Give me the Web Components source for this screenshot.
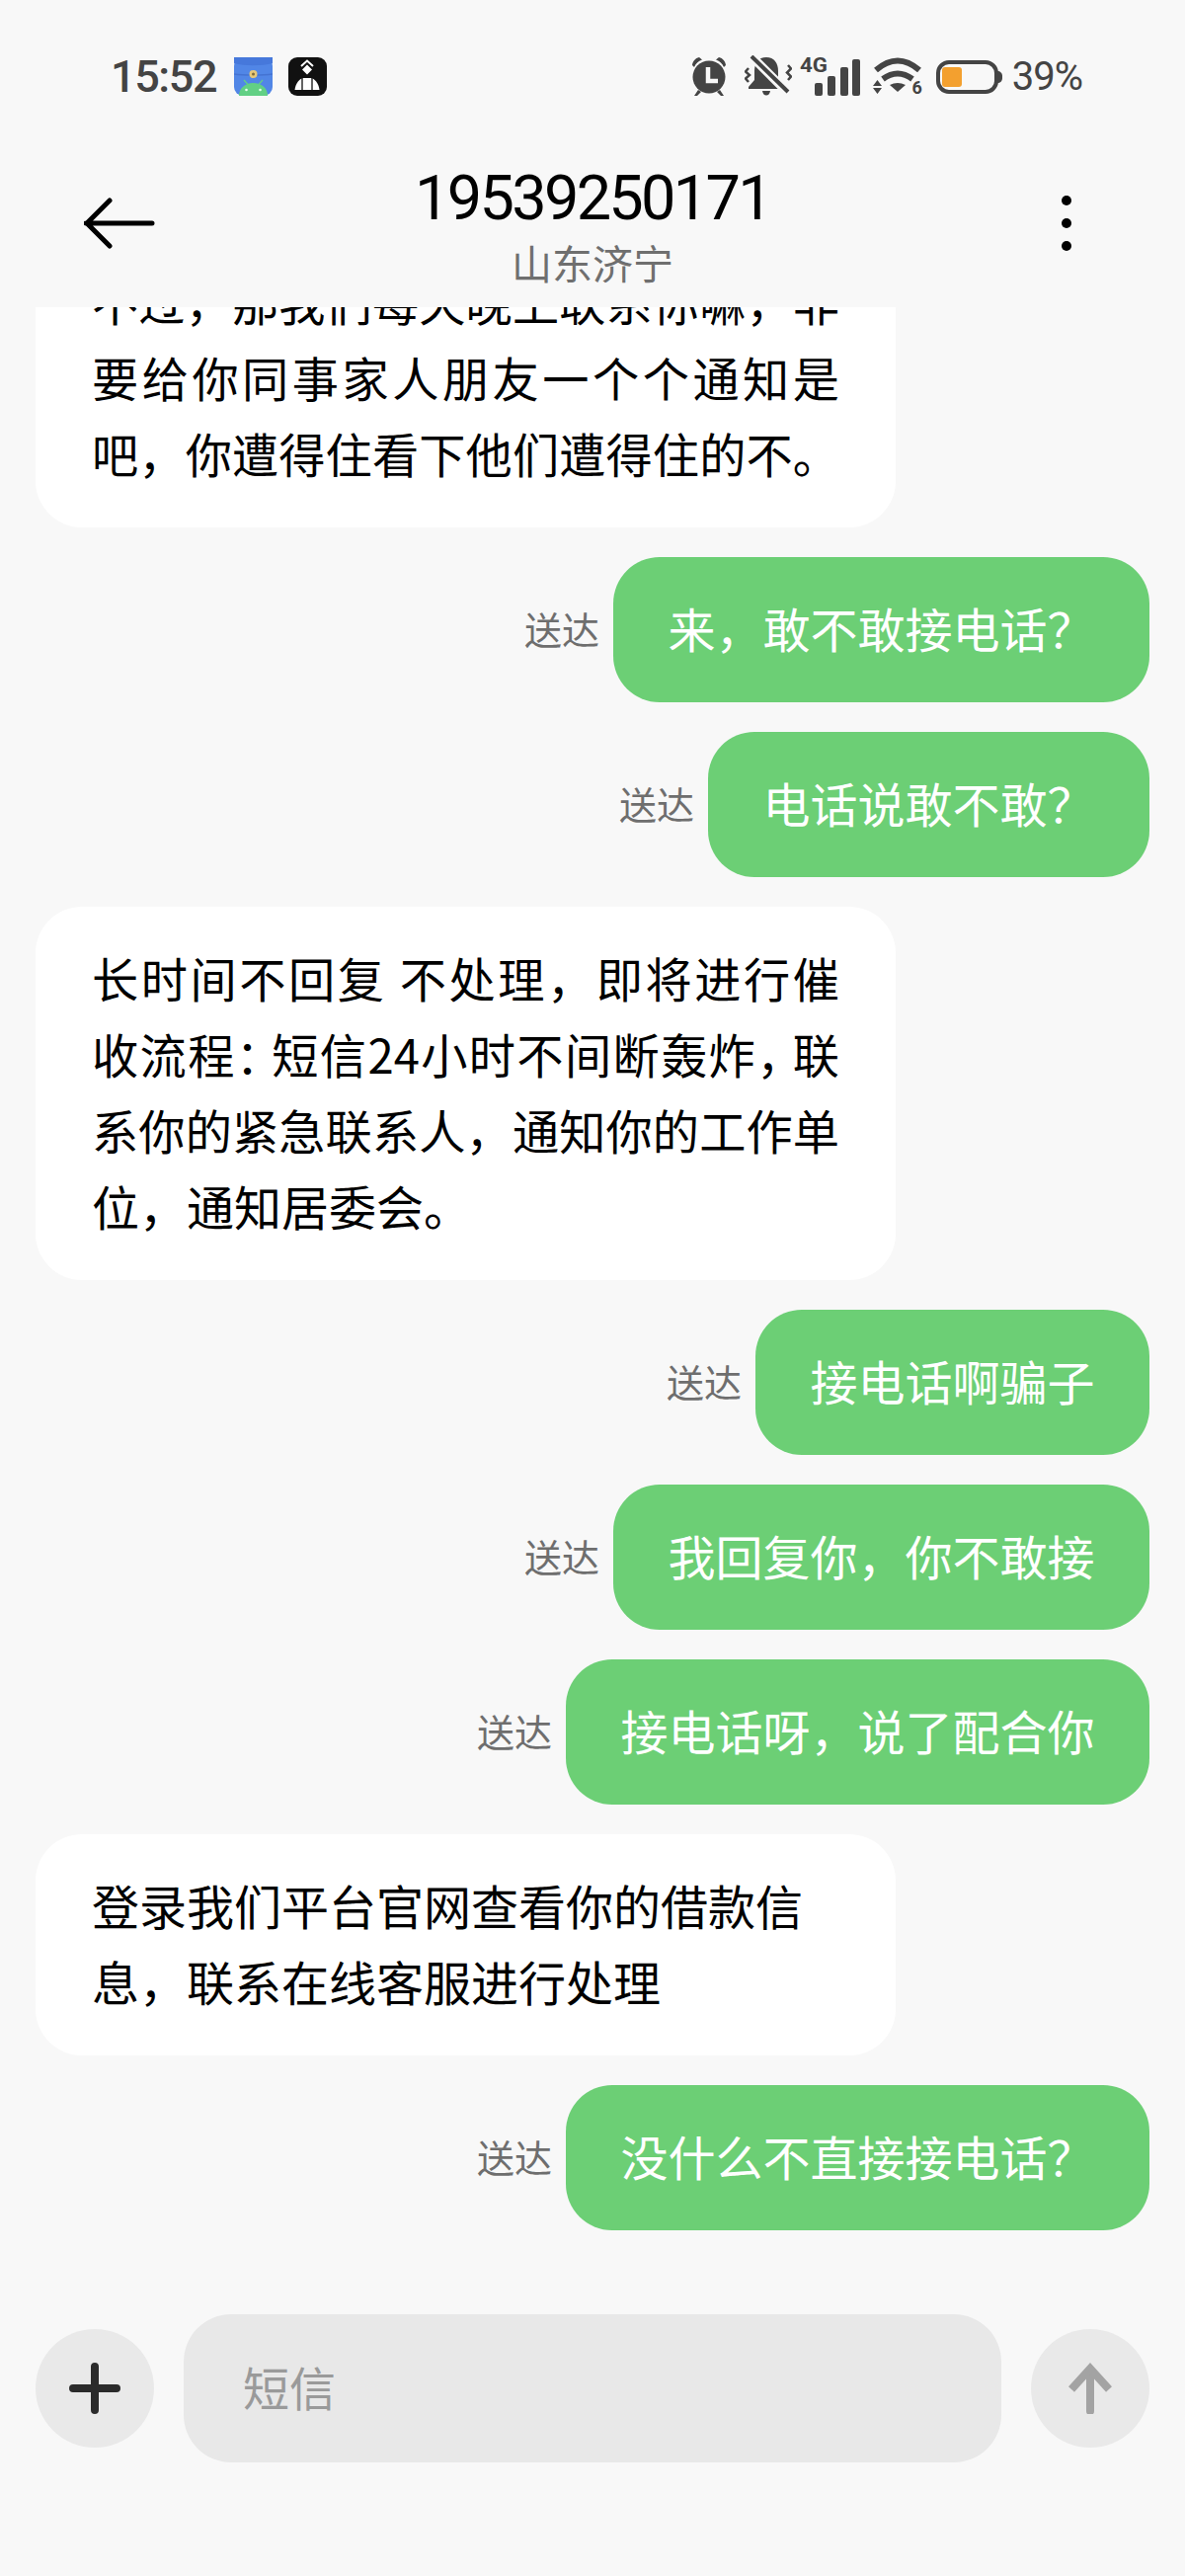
<!DOCTYPE html>
<html lang="zh-CN">
<head>
<meta charset="utf-8">
<title>短信</title>
<style>
	html, body { margin: 0; padding: 0; background: #f8f8f8; }
	body { font-family: "Noto Sans CJK SC", "Noto Sans", sans-serif; }
</style>
</head>
<body>
<sms-app>
	<status-bar slot="status"></status-bar>
	<chat-header slot="header" number="19539250171" place="山东济宁"></chat-header>
	<message-list slot="messages">
		<chat-bubble from="them">
			<bubble-line fit>不过，那我们每天晚上联系你嘛，非</bubble-line>
			<bubble-line fit>要给你同事家人朋友一个个通知是</bubble-line>
			<bubble-line fit>吧，你遭得住看下他们遭得住的不。</bubble-line>
		</chat-bubble>
		<chat-bubble from="me">来，敢不敢接电话？</chat-bubble>
		<chat-bubble from="me">电话说敢不敢？</chat-bubble>
		<chat-bubble from="them">
			<bubble-line fit>长时间不回复 不处理，即将进行催</bubble-line>
			<bubble-line fit>收流程<span style="letter-spacing:-12px">：</span>短信24小时不间断轰炸<span style="letter-spacing:-12px">，</span>联</bubble-line>
			<bubble-line fit>系你的紧急联系人，通知你的工作单</bubble-line>
			<bubble-line>位，通知居委会。</bubble-line>
		</chat-bubble>
		<chat-bubble from="me">接电话啊骗子</chat-bubble>
		<chat-bubble from="me">我回复你，你不敢接</chat-bubble>
		<chat-bubble from="me">接电话呀，说了配合你</chat-bubble>
		<chat-bubble from="them">
			<bubble-line>登录我们平台官网查看你的借款信</bubble-line>
			<bubble-line>息，联系在线客服进行处理</bubble-line>
		</chat-bubble>
		<chat-bubble from="me">没什么不直接接电话？</chat-bubble>
	</message-list>
	<chat-composer slot="composer" placeholder="短信"></chat-composer>
</sms-app>

<script>
customElements.define('sms-app', class extends HTMLElement
{
	connectedCallback()
	{
		const shadow = this.attachShadow({ mode: 'open' });

		shadow.innerHTML = `
			<style>
				:host {
					display: flex;
					flex-direction: column;
					width: 1200px;
					height: 2608px;
					overflow: hidden;
					background: #f8f8f8;
				}
				.list {
					flex: 1;
					min-height: 0;
					display: flex;
					flex-direction: column;
				}
			</style>
			<slot name="status"></slot>
			<slot name="header"></slot>
			<div class="list"><slot name="messages"></slot></div>
			<slot name="composer"></slot>
		`;
	}
});

customElements.define('status-bar', class extends HTMLElement
{
	connectedCallback()
	{
		const shadow = this.attachShadow({ mode: 'open' });

		shadow.innerHTML = `
			<style>
				:host {
					display: flex;
					align-items: center;
					height: 78px;
					padding: 0 104px 0 112px;
					margin-top: 38px;
					color: #444;
					font-family: Roboto, "Noto Sans", sans-serif;
				}
				.time {
					font-size: 45px;
					font-weight: 500;
					letter-spacing: -1.4px;
					line-height: 1;
				}
				.app {
					width: 39px;
					height: 39px;
					display: block;
				}
				.app.a { margin-left: 18px; }
				.app.b { margin-left: 16px; }
				.right {
					margin-left: auto;
					display: flex;
					align-items: center;
				}
				svg { display: block; flex: none; }
				svg text {
					font-family: Roboto, "Noto Sans", sans-serif;
					font-weight: 700;
					fill: #444;
				}
				.pct {
					font-size: 40px;
					font-weight: 400;
					letter-spacing: -1px;
					margin-left: 10px;
					padding-top: 2px;
					line-height: 1;
				}
			</style>
			<span class="time">15:52</span>
			<svg class="app a" viewBox="0 0 39 39">
				<rect width="39" height="39" rx="9" fill="#5186e6"/>
				<path d="M0 6c10 3 29 3 39 0V0H0z" fill="#4678db"/>
				<path d="M0 17c10 1.500 29 1.500 39 0" fill="none" stroke="#4473d2" stroke-width="1.500"/>
				<circle cx="19.500" cy="17" r="4" fill="#e6c878"/>
				<circle cx="19.500" cy="17" r="1.500" fill="#7d6b3c"/>
				<path d="M10 23l4.500 5M29 23l-4.500 5" stroke="#62d084" stroke-width="1.200"/>
				<path d="M5 39c0-8 6.500-13 14.500-13S34 31 34 39z" fill="#62d084"/>
				<circle cx="12.500" cy="33" r="1.300" fill="#e8fff0"/>
				<circle cx="26.500" cy="33" r="1.300" fill="#e8fff0"/>
			</svg>
			<svg class="app b" viewBox="0 0 39 39">
				<rect width="39" height="39" rx="9" fill="#111"/>
				<path d="M19 7.500l5 5-5 5-5-5z" fill="#fff"/>
				<path d="M13 9l6-5.500L25 9" fill="none" stroke="#fff" stroke-width="2"/>
				<path d="M6.500 33C7.500 26 11 22 15 21h8c4 1 7.500 5 8.500 12z" fill="#fff"/>
				<path d="M14 21v12M24 21v12" stroke="#111" stroke-width="1.300"/>
			</svg>
			<div class="right">
				<svg width="36" height="41" viewBox="0 0 36 41">
					<circle cx="18" cy="21" r="16.500" fill="#444"/>
					<path d="M1 9C1.500 5 4 2 8 1l3 2.500C7 5 4.500 7.500 3 11zM35 9C34.500 5 32 2 28 1l-3 2.500C29 5 31.500 7.500 33 11z" fill="#444"/>
					<path d="M7 34l-4 6h3l4-4zM29 34l4 6h-3l-4-4z" fill="#444"/>
					<path d="M17 11v14h10" fill="none" stroke="#f8f8f8" stroke-width="4.500"/>
				</svg>
				<svg style="margin-left:18px" width="48" height="42" viewBox="0 0 48 42">
					<path d="M22 2c-8 0-12 6-12 14v9l-6 7v2h36v-2l-6-7v-9c0-8-4-14-12-14z" fill="#444"/>
					<path d="M18 36h8c-.5 3-2 4.500-4 4.500s-3.500-1.500-4-4.500z" fill="#444"/>
					<path d="M6 0l38 38" fill="none" stroke="#f8f8f8" stroke-width="9"/>
					<path d="M7 1l37 36" fill="none" stroke="#444" stroke-width="4"/>
					<path d="M4 13l-3 3.500 4 3.500-4 3.500 3 3.500M44 10l3 3.500-4 4 4 4-3 3.500" fill="none" stroke="#444" stroke-width="2.500"/>
				</svg>
				<svg style="margin-left:8px" width="61" height="41" viewBox="0 0 61 41">
					<text x="0" y="16" font-size="21" textLength="28" lengthAdjust="spacingAndGlyphs">4G</text>
					<rect x="15" y="27" width="8" height="13" rx="2" fill="#444"/>
					<rect x="28" y="20" width="8" height="20" rx="2" fill="#444"/>
					<rect x="41" y="11" width="8" height="29" rx="2" fill="#444"/>
					<rect x="53" y="3" width="8" height="37" rx="2" fill="#444"/>
				</svg>
				<svg style="margin-left:13px" width="50" height="38" viewBox="0 0 50 38">
					<path d="M3 13Q25 -6 47 13" fill="none" stroke="#444" stroke-width="6"/>
					<path d="M10 22Q25 11 40 22" fill="none" stroke="#444" stroke-width="6"/>
					<path d="M17 28Q25 24 33 28L25 35z" fill="#444"/>
					<path d="M4.500 23l4.500 6H0zM4.500 37l4.500-6H0z" fill="#444"/>
					<text x="39.500" y="37" font-size="18">6</text>
				</svg>
				<svg style="margin-left:13px" width="68" height="35" viewBox="0 0 68 35">
					<rect x="3" y="3" width="59" height="30" rx="11" fill="none" stroke="#444" stroke-width="4"/>
					<rect x="7" y="8" width="20" height="20" rx="3" fill="#f3a02f"/>
					<path d="M63 12c3 0 5 2 5 5v2c0 3-2 5-5 5z" fill="#444"/>
				</svg>
				<span class="pct">39%</span>
			</div>
		`;
	}
});

customElements.define('chat-header', class extends HTMLElement
{
	connectedCallback()
	{
		const shadow = this.attachShadow({ mode: 'open' });

		shadow.innerHTML = `
			<style>
				:host {
					display: grid;
					grid-template-columns: 300px 1fr 300px;
					align-items: center;
					height: 195px;
					box-sizing: border-box;
					padding: 25px 0 0;
					color: #000;
				}
				.back { padding-left: 85px; }
				.more { justify-self: end; padding-right: 115px; }
				svg { display: block; }
				.who { text-align: center; padding-top: 2px; }
				.number {
					font-family: Roboto, "Noto Sans", sans-serif;
					font-size: 63px;
					letter-spacing: -2.700px;
					line-height: 76px;
				}
				.place {
					font-family: "Noto Sans CJK SC", sans-serif;
					font-size: 41px;
					line-height: 52px;
					color: #6f6f6f;
				}
			</style>
			<div class="back">
				<svg width="72" height="52" viewBox="0 0 72 52">
					<path d="M2 26h67M26 3L3 26l23 23" fill="none" stroke="#000" stroke-width="5" stroke-linecap="round" stroke-linejoin="round"/>
				</svg>
			</div>
			<div class="who">
				<div class="number">${this.getAttribute('number')}</div>
				<div class="place">${this.getAttribute('place')}</div>
			</div>
			<div class="more">
				<svg width="10" height="56" viewBox="0 0 10 56">
					<circle cx="5" cy="5" r="5"/>
					<circle cx="5" cy="28" r="5"/>
					<circle cx="5" cy="51" r="5"/>
				</svg>
			</div>
		`;
	}
});

customElements.define('message-list', class extends HTMLElement
{
	connectedCallback()
	{
		const shadow = this.attachShadow({ mode: 'open' });

		// newest message stays at the bottom, the oldest one gets cut by the header
		shadow.innerHTML = `
			<style>
				:host {
					display: flex;
					flex-direction: column;
					justify-content: flex-end;
					gap: 30px;
					flex: 1;
					min-height: 0;
					overflow: hidden;
					padding: 0 36px 85px;
				}
			</style>
			<slot></slot>
		`;
	}
});

customElements.define('chat-bubble', class extends HTMLElement
{
	get mine()
	{
		return this.getAttribute('from') === 'me';
	}

	connectedCallback()
	{
		const shadow = this.attachShadow({ mode: 'open' });

		shadow.innerHTML = `
			<style>
				:host {
					display: flex;
					flex: none;
					align-items: center;
					justify-content: ${this.mine ? 'flex-end' : 'flex-start'};
					gap: 14px;
				}
				.state {
					font-size: 38px;
					line-height: 1;
					color: #6e6e6e;
					padding-bottom: 3px;
				}
				.body {
					box-sizing: border-box;
					padding: 33px ${this.mine ? '55.5px' : '57px'} 37px;
					border-radius: 47px;
					font-size: 48px;
					line-height: 77px;
					white-space: nowrap;
					background: ${this.mine ? '#6ccf75' : '#fff'};
					color: ${this.mine ? '#fff' : '#000'};
					${this.mine ? '' : 'width: 871px;'}
				}
			</style>
			${this.mine ? '<span class="state">送达</span>' : ''}
			<div class="body"><slot></slot></div>
		`;
	}
});

customElements.define('bubble-line', class extends HTMLElement
{
	connectedCallback()
	{
		const shadow = this.attachShadow({ mode: 'open' });

		// fit: the line fills the bubble width, 16 characters get squeezed a bit
		shadow.innerHTML = `
			<style>
				:host {
					display: block;
				}
				:host([fit]) {
					font-size: 47.2px;
					white-space: normal;
					text-align: justify;
					text-align-last: justify;
				}
			</style>
			<slot></slot>
		`;
	}
});

customElements.define('chat-composer', class extends HTMLElement
{
	connectedCallback()
	{
		const shadow = this.attachShadow({ mode: 'open' });

		shadow.innerHTML = `
			<style>
				:host {
					display: flex;
					align-items: center;
					gap: 30px;
					height: 150px;
					padding: 0 36px 115px;
				}
				.round {
					flex: none;
					width: 120px;
					height: 120px;
					border-radius: 50%;
					background: #e9e9e9;
					display: flex;
					align-items: center;
					justify-content: center;
				}
				.field {
					flex: 1;
					height: 150px;
					box-sizing: border-box;
					padding: 0 0 6px 60px;
					border-radius: 48px;
					background: #e8e8e8;
					display: flex;
					align-items: center;
					font-size: 47px;
					color: #9a9a9a;
				}
				svg { display: block; }
			</style>
			<div class="round">
				<svg width="52" height="52" viewBox="0 0 52 52">
					<path d="M4 26h44M26 4v44" fill="none" stroke="#2b2b2b" stroke-width="8" stroke-linecap="round"/>
				</svg>
			</div>
			<div class="field">${this.getAttribute('placeholder')}</div>
			<div class="round">
				<svg width="48" height="52" viewBox="0 0 48 52">
					<path d="M24 49V8" fill="none" stroke="#a3a3a3" stroke-width="8" stroke-linecap="round"/>
					<path d="M5 27L24 6l19 21" fill="none" stroke="#a3a3a3" stroke-width="8" stroke-linejoin="miter"/>
				</svg>
			</div>
		`;
	}
});
</script>
</body>
</html>
